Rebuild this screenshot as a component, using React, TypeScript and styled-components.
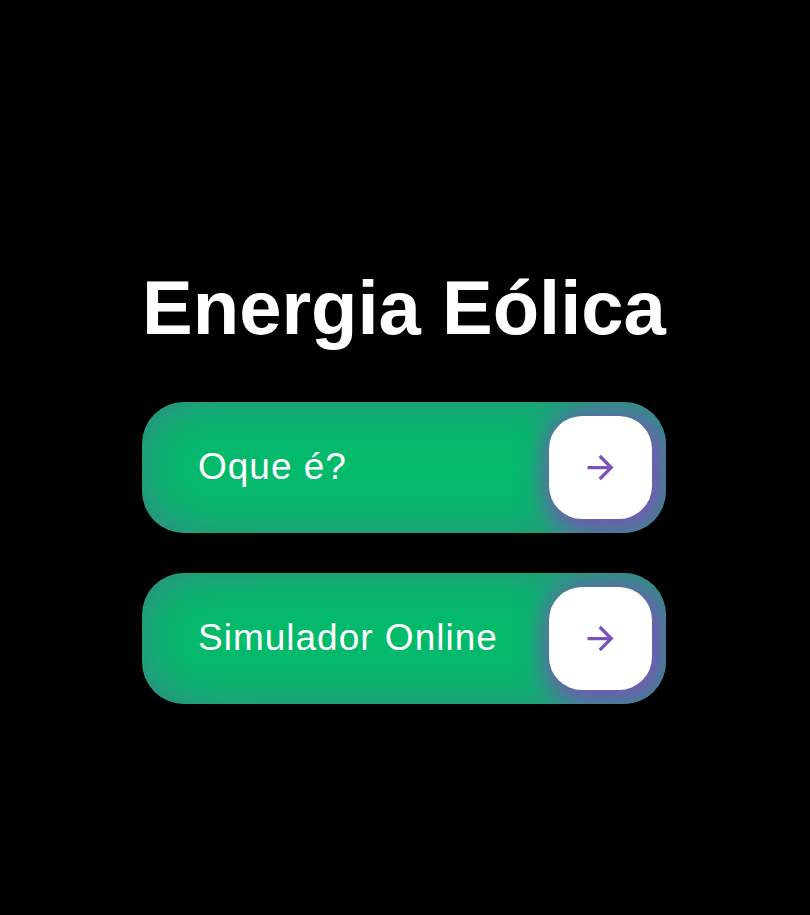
import React from "react";
import styled, { createGlobalStyle } from "styled-components";

const GlobalStyle = createGlobalStyle`
  * { box-sizing: border-box; }
  body {
    margin: 0;
    background: #000;
    color: #fff;
    font-family: "Liberation Sans", Arial, sans-serif;
  }
`;

const Page = styled.main`
  min-height: 100vh;
  display: flex;
  flex-direction: column;
  align-items: center;
  justify-content: center;
  padding: 52px 2px 0 0;
`;

const Title = styled.h1`
  margin: 0 0 50px;
  font-size: 76px;
  line-height: 88px;
  text-align: center;
`;

const Menu = styled.nav`
  display: flex;
  flex-direction: column;
  align-items: center;
  gap: 40px;
  width: 100%;
`;

const MenuButton = styled.button`
  display: flex;
  align-items: center;
  justify-content: space-between;
  width: 524px;
  max-width: 100%;
  padding: 14px 14px 14px 56px;
  border: 0;
  border-radius: 42px;
  overflow: hidden;
  background: #04bb6b;
  box-shadow: inset 0 0 75px -28px #714da6;
  color: #fff;
  font-family: inherit;
  font-size: 37px;
  letter-spacing: 1px;
  text-align: left;
  cursor: pointer;
`;

const IconTile = styled.span`
  display: flex;
  flex: none;
  align-items: center;
  justify-content: center;
  width: 103px;
  height: 103px;
  border-radius: 33px;
  background: #fff;
  color: #7b52b9;
  box-shadow: 5px 5px 28px 9px #7b52b9;
`;

const ArrowIcon = () => (
  <svg width="39" height="39" viewBox="0 0 24 24" fill="currentColor" aria-hidden="true">
    <path d="M16.172 11l-5.364-5.364 1.414-1.414L20 12l-7.778 7.778-1.414-1.414L16.172 13H4v-2z" />
  </svg>
);

const entries = ["Oque é?", "Simulador Online"];

export default function App() {
  return (
    <>
      <GlobalStyle />
      <Page>
        <Title>Energia Eólica</Title>
        <Menu>
          {entries.map((label) => (
            <MenuButton key={label} type="button">
              {label}
              <IconTile>
                <ArrowIcon />
              </IconTile>
            </MenuButton>
          ))}
        </Menu>
      </Page>
    </>
  );
}
